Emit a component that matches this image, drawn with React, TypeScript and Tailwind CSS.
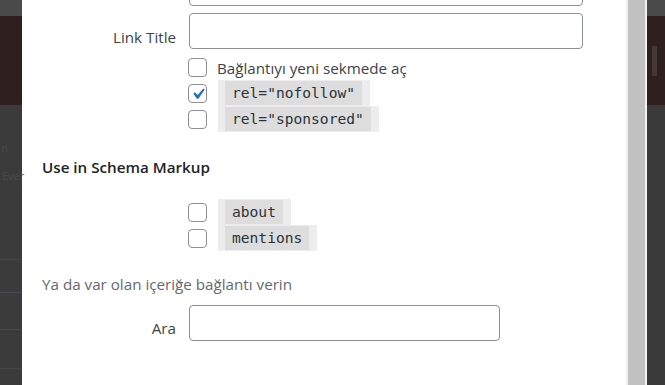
import React from 'react';

const Box: React.FC<{ checked?: boolean }> = ({ checked }) => (
  <span className="relative flex h-[19px] w-[19px] shrink-0 items-center justify-center rounded-[4px] border border-[#8c8f94] bg-white">
    {checked && (
      <svg width="22" height="22" viewBox="0 0 20 20" className="absolute left-[-2px] top-[-2px]">
        <path d="M14.83 4.89l1.34.94-5.81 8.38H9.02L5.78 9.67l1.34-1.25 2.57 2.4z" fill="#2271b1" />
      </svg>
    )}
  </span>
);

const Code: React.FC<{ text: string }> = ({ text }) => (
  <span className="flex h-[26px] items-center bg-[#ededed] pl-[7px] pr-[8px]">
    <code className="flex h-[24px] items-center bg-[#dddddd] px-[7px] font-['DejaVu_Sans_Mono',monospace] text-[14.6px] text-[#2c3338]">
      {text}
    </code>
  </span>
);

const App: React.FC = () => {
  return (
    <div className="flex h-[385px] w-[665px] overflow-hidden bg-white font-['Open_Sans',sans-serif] text-[15.2px] leading-[20px]">
      {/* backdrop left */}
      <div className="flex w-[22px] shrink-0 flex-col">
        <div className="h-[16px] bg-[#4b4b4b]"></div>
        <div className="h-[89px] bg-[#2f1f1f]"></div>
        <div className="flex flex-1 flex-col bg-[#3b3b3b] text-[11px] leading-[14px] text-[#4a4a4a]">
          <div className="mt-[36px] pl-[1px]">n</div>
          <div className="mt-[14px] pl-[2px]">Ever</div>
          <div className="mt-[76px] h-px bg-[#454545]"></div>
          <div className="mt-[32px] h-px bg-[#4a4a55]"></div>
          <div className="mt-[36px] h-px bg-[#4a4a55]"></div>
          <div className="mt-[38px] h-px bg-[#454545]"></div>
        </div>
      </div>

      {/* modal */}
      <div className="flex flex-1">
        <div className="flex-1 overflow-hidden pl-[20px] text-[#3c434a]">
          <div className="ml-[147px] -mt-[30px] h-[36px] w-[394px] rounded-[4px] border border-[#8c8f94]"></div>

          <div className="mt-[7px] flex items-start">
            <span className="w-[134px] pt-[14px] text-right">Link Title</span>
            <div className="ml-[13px] h-[36px] w-[394px] rounded-[4px] border border-[#8c8f94]"></div>
          </div>

          <div className="ml-[146px] mt-[9px] flex flex-col">
            <div className="flex h-[19px] items-center gap-[10px]">
              <Box />
              <span className="text-[#3c434a]">Bağlantıyı yeni sekmede aç</span>
            </div>
            <div className="mt-[3px] flex items-center gap-[11px]">
              <Box checked />
              <Code text='rel="nofollow"' />
            </div>
            <div className="flex items-center gap-[11px]">
              <Box />
              <Code text='rel="sponsored"' />
            </div>
          </div>

          <div className="mt-[25px] font-semibold text-[#1d2327]">Use in Schema Markup</div>

          <div className="ml-[146px] mt-[22px] flex flex-col">
            <div className="flex items-center gap-[11px]">
              <Box />
              <Code text="about" />
            </div>
            <div className="flex items-center gap-[11px]">
              <Box />
              <Code text="mentions" />
            </div>
          </div>

          <div className="mt-[23px] text-[#646970]">Ya da var olan içeriğe bağlantı verin</div>

          <div className="mt-[11px] flex items-start">
            <span className="w-[134px] pt-[13px] text-right">Ara</span>
            <div className="ml-[13px] h-[36px] w-[311px] rounded-[4px] border border-[#8c8f94]"></div>
          </div>
        </div>

        {/* scrollbar */}
        <div className="flex w-[21px] shrink-0 bg-[#f1f1f1] pl-[2px] pr-[2px]">
          <div className="w-[17px] bg-[#c1c1c1]"></div>
        </div>
      </div>

      {/* backdrop right */}
      <div className="flex w-[18px] shrink-0 flex-col">
        <div className="h-[16px] bg-[#4b4b4b]"></div>
        <div className="flex h-[89px] items-start bg-[#2f1f1f] pl-[5px] pt-[30px]">
          <div className="h-[30px] w-[5px] bg-[#423838]"></div>
        </div>
        <div className="flex-1 bg-[#3a3a3a]"></div>
      </div>
    </div>
  );
};

export default App;
